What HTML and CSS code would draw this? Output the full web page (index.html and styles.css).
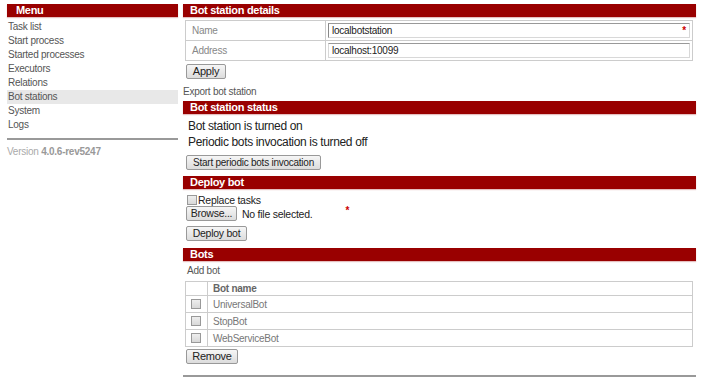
FILE: index.html
```html
<!DOCTYPE html>
<html lang="en">

<head>
    <meta charset="UTF-8">
    <title>Bot stations</title>
    <link rel="stylesheet" href="styles.css">
</head>

<body>
    <div class="page">
        <div class="menu">
            <div class="bar">Menu</div>
            <a class="item">Task list</a>
            <a class="item">Start process</a>
            <a class="item">Started processes</a>
            <a class="item">Executors</a>
            <a class="item">Relations</a>
            <a class="item active">Bot stations</a>
            <a class="item">System</a>
            <a class="item">Logs</a>
            <div class="version">Version <b>4.0.6-rev5247</b></div>
        </div>

        <div class="content">
            <div class="bar">Bot station details</div>
            <table class="details">
                <tr>
                    <td class="label">Name</td>
                    <td class="field"><div class="input first">localbotstation<span class="req">*</span></div></td>
                </tr>
                <tr>
                    <td class="label">Address</td>
                    <td class="field"><div class="input">localhost:10099</div></td>
                </tr>
            </table>
            <button class="btn apply">Apply</button>
            <div class="link">Export bot station</div>

            <div class="bar">Bot station status</div>
            <p class="status">Bot station is turned on</p>
            <p class="status">Periodic bots invocation is turned off</p>
            <button class="btn start">Start periodic bots invocation</button>

            <div class="bar">Deploy bot</div>
            <div class="check"><span class="box"></span>Replace tasks</div>
            <div class="file">
                <button class="btn">Browse...</button>
                <span class="nofile">No file selected.</span>
                <span class="req star">*</span>
            </div>
            <button class="btn deploy">Deploy bot</button>

            <div class="bar">Bots</div>
            <div class="link add">Add bot</div>
            <table class="bots">
                <tr>
                    <th class="sel"></th>
                    <th>Bot name</th>
                </tr>
                <tr>
                    <td class="sel"><span class="box"></span></td>
                    <td>UniversalBot</td>
                </tr>
                <tr>
                    <td class="sel"><span class="box"></span></td>
                    <td>StopBot</td>
                </tr>
                <tr>
                    <td class="sel"><span class="box"></span></td>
                    <td>WebServiceBot</td>
                </tr>
            </table>
            <button class="btn remove">Remove</button>
            <div class="bottom"></div>
        </div>
    </div>
</body>

</html>
```

FILE: styles.css
```css
body {
    margin: 0;
    background-color: white;
    font-family: "Liberation Sans", Arial, sans-serif;
    font-size: 10px;
    letter-spacing: -0.25px;
    color: #555;
}

.page {
    display: flex;
    padding: 4px 8px 0 7px;
    gap: 5px;
}

.menu {
    width: 171px;
    flex: none;
}

.content {
    flex: 1;
}

.bar {
    background-color: #990000;
    color: white;
    font-weight: bold;
    font-size: 11px;
    letter-spacing: -0.3px;
    height: 13px;
    line-height: 13px;
    padding-left: 7px;
    box-shadow: 0 1px 1px rgba(153, 0, 0, 0.25);
}

.menu .bar {
    padding-left: 9px;
    margin-bottom: 3px;
}

.item {
    display: block;
    height: 14px;
    line-height: 14px;
    padding-left: 1px;
    color: #555;
}

.item.active {
    background-color: #e8e8e8;
}

.version {
    margin-top: 6px;
    border-top: 2px solid #999;
    padding-top: 6px;
    color: #aaa;
}

.version b {
    font-weight: bold;
    color: #999;
}

.details {
    border-collapse: collapse;
    width: 508px;
    margin: 3px 0 0 2px;
    border: 1px solid #ccc;
}

.details td {
    border: 1px solid #ccc;
    height: 17px;
    padding: 0;
}

.details .label {
    width: 133px;
    padding-left: 6px;
    color: #888;
}

.details .field {
    padding: 1px 2px;
}

.input {
    position: relative;
    height: 13px;
    line-height: 13px;
    border: 1px solid #d8d8d8;
    border-top-color: #999;
    padding-left: 3px;
    color: #222;
}

.input.first {
    border-left-color: #888;
}

.req {
    color: #cc0000;
    font-weight: bold;
}

.input .req {
    position: absolute;
    right: 3px;
    top: 0;
}

.btn {
    display: block;
    font-family: "Liberation Sans", Arial, sans-serif;
    font-size: 10.5px;
    letter-spacing: -0.25px;
    white-space: nowrap;
    color: #222;
    height: 15px;
    padding: 0;
    border: 1px solid #999;
    border-radius: 2px;
    background: linear-gradient(#f6f6f6, #dcdcdc);
    line-height: 13px;
}

.apply {
    margin: 3px 0 0 3px;
    width: 40px;
    font-size: 11px;
}

.link {
    margin-top: 6px;
    height: 13px;
    line-height: 13px;
    color: #555;
    margin-bottom: 3px;
}

.status {
    margin: 0;
    padding-left: 5px;
    font-size: 12px;
    letter-spacing: -0.35px;
    color: #222;
    line-height: 16px;
}

.status:first-of-type {
    margin-top: 4px;
}

.start {
    margin: 5px 0 6px 3px;
    width: 135px;
    font-size: 10px;
}

.check {
    display: flex;
    align-items: center;
    margin: 5px 0 0 4px;
    height: 11px;
    color: #222;
    font-size: 10.5px;
}

.box {
    display: inline-block;
    width: 8px;
    height: 8px;
    border: 1px solid #999;
    background: linear-gradient(#eee, #d8d8d8);
    margin-right: 1px;
}

.file {
    display: flex;
    align-items: center;
    margin: 1px 0 0 3px;
    height: 15px;
}

.file .btn {
    width: 51px;
}

.nofile {
    margin-left: 5px;
    color: #222;
    font-size: 10.5px;
}

.star {
    margin-left: 33px;
    margin-top: -6px;
}

.deploy {
    margin: 5px 0 7px 3px;
    width: 61px;
}

.add {
    margin-top: 3px;
    margin-bottom: 4px;
    padding-left: 4px;
}

.bots {
    border-collapse: collapse;
    width: 508px;
    margin-left: 2px;
    border: 1px solid #ccc;
}

.bots th,
.bots td {
    border: 1px solid #ccc;
    height: 16px;
    padding: 0 0 0 5px;
    text-align: left;
    color: #777;
}

.bots th {
    height: 13px;
    font-weight: bold;
    color: #666;
}

.bots .sel {
    width: 16px;
    padding-left: 5px;
}

.bots .sel .box {
    display: block;
}

.remove {
    margin: 2px 0 0 3px;
    width: 52px;
    font-size: 11px;
}

.bottom {
    margin-top: 11px;
    border-top: 2px solid #999;
}
```
